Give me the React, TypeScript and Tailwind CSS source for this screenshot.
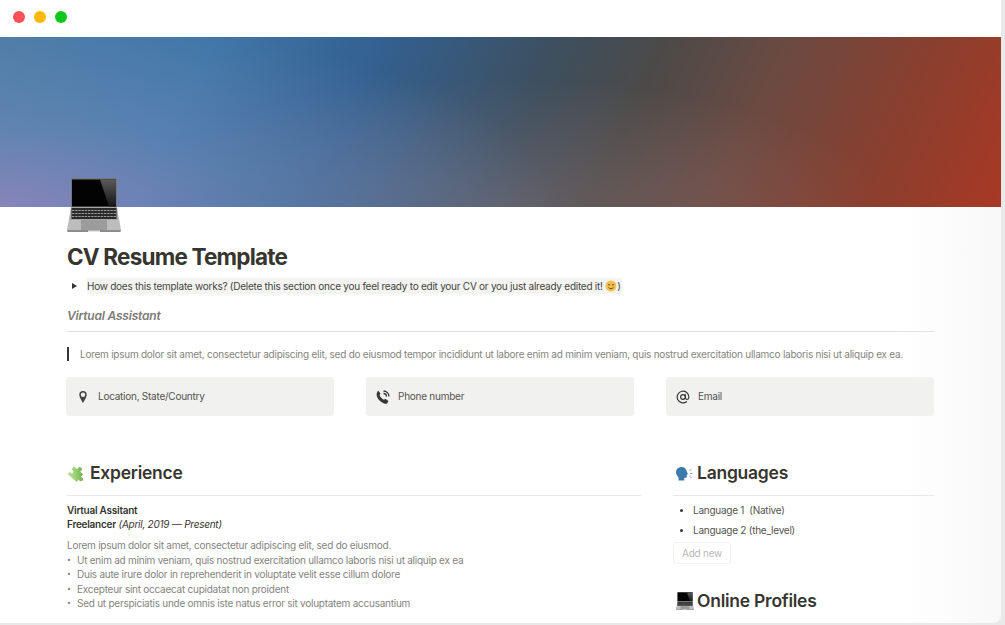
import { AtSign } from "lucide-react";

const sans = { fontFamily: "Inter, 'Liberation Sans', sans-serif" };

const bullets = [
  "Ut enim ad minim veniam, quis nostrud exercitation ullamco laboris nisi ut aliquip ex ea",
  "Duis aute irure dolor in reprehenderit in voluptate velit esse cillum dolore",
  "Excepteur sint occaecat cupidatat non proident",
  "Sed ut perspiciatis unde omnis iste natus error sit voluptatem accusantium",
];

function Laptop({ size }: { size: number }) {
  const gid = `shine${size}`;
  return (
    <svg width={size} height={size} viewBox="0 0 54 54">
      <defs>
        <linearGradient id={gid} x1="0" y1="0" x2="0" y2="1">
          <stop offset="0" stopColor="#5a5a5a" />
          <stop offset="1" stopColor="#161616" />
        </linearGradient>
      </defs>
      <path d="M5 0h44a1 1 0 0 1 1 1v28H4V1a1 1 0 0 1 1-1z" fill="#77777a" />
      <rect x="5" y="1.500" width="44" height="27" fill="#030303" />
      <path d="M33 1.500h16v27h-7z" fill={`url(#${gid})`} />
      <path d="M4 29h46l4 23H0z" fill="#bdbdbd" />
      <path d="M4 29h46l1 13H3z" fill="#a8a8a8" />
      <rect x="4.500" y="30" width="45" height="11" fill="#2a2a2a" />
      <path d="M5 32.500h44M5 35.500h44M5 38.500h44" stroke="#9a9a9a" strokeWidth="1" strokeDasharray="2.400 0.800" />
      <rect x="14" y="42" width="26" height="10" fill="#9c9c9c" />
      <path d="M0 52h54l-.6 2H.6z" fill="#8c8c8c" />
      <rect x="21" y="52.500" width="12" height="1.500" fill="#e4e4e4" />
    </svg>
  );
}

function Puzzle() {
  return (
    <svg width="20" height="20" viewBox="0 0 20 20">
      <defs>
        <linearGradient id="puzzleFill" gradientUnits="userSpaceOnUse" x1="2" y1="18" x2="18" y2="2">
          <stop offset="0" stopColor="#cfe8a8" />
          <stop offset="0.5" stopColor="#92cb6a" />
          <stop offset="1" stopColor="#55934a" />
        </linearGradient>
      </defs>
      <g transform="rotate(40 10 10)">
        <path
          d="M3.500 7h4.200c.4 0-.2-.9-.2-1.700 0-1.300 1-2.100 2.200-2.100s2.200.8 2.200 2.100c0 .8-.6 1.700-.2 1.700h3.800v3.300c0 .4.900-.2 1.700-.2 1.200 0 1.900 1 1.900 2.100s-.7 2.100-1.900 2.100c-.8 0-1.700-.6-1.700-.2V17H3.500v-3.200c0-.4.800.2 1.500.2 1 0 1.700-.8 1.700-1.700s-.7-1.700-1.700-1.700c-.7 0-1.500.6-1.500.2z"
          fill="url(#puzzleFill)"
        />
      </g>
    </svg>
  );
}

function Speaking() {
  return (
    <svg width="19" height="19" viewBox="0 0 19 19">
      <path d="M6.500 3c3 0 5 2 5.200 4.500l1.300 2.700-1.200.5V12.500c0 1-1 1.400-2.500 1.200V16.500H3.500v-3.300C1.800 11.800 1 10 1 8.300 1 5.400 3.300 3 6.500 3z" fill="#3c79ad" />
      <path d="M14.500 6.500l2-1.200M15 9.500h2.500M14.500 12.500l2 1.200" stroke="#8aa6bd" strokeWidth="1" />
    </svg>
  );
}

function Smile() {
  return (
    <svg width="12" height="12" viewBox="0 0 12 12" className="inline-block align-[-2px]">
      <circle cx="6" cy="6" r="5.500" fill="#f0c04f" />
      <path d="M3 4.800h2M7 4.800h2" stroke="#6b4a1a" strokeWidth="1" />
      <path d="M3.500 7.500c1.500 1.500 3.500 1.500 5 0" stroke="#6b4a1a" strokeWidth="1" fill="none" />
    </svg>
  );
}

function PinIcon() {
  return (
    <svg width="16" height="16" viewBox="0 0 16 16" fill="none">
      <path d="M8 2a3.700 3.700 0 0 0-3.700 3.700C4.300 8.300 8 14 8 14s3.700-5.700 3.700-8.300A3.700 3.700 0 0 0 8 2z" fill="#45443f" />
      <circle cx="8" cy="5.700" r="2.200" fill="#f1f1ef" />
    </svg>
  );
}

function PhoneIcon() {
  return (
    <svg width="16" height="16" viewBox="0 0 16 16" fill="none">
      <path d="M3 1.500l2.500 3-1 1.500c.5 2 2.500 4 4.500 4.800l1.500-1 3 2.500-1.500 2.200c-1 .5-2 .3-3.500-.3-3-1.200-5.500-3.700-6.500-6.700-.5-1.500-.5-2.700 0-3.700z" fill="#37352f" />
      <path d="M8.500 2a5.500 5.500 0 0 1 5.500 5.500M8.500 4.500a3 3 0 0 1 3 3" stroke="#37352f" strokeWidth="1.300" />
    </svg>
  );
}

function ContactCard({ icon, label }: { icon: React.ReactNode; label: string }) {
  return (
    <div className="flex h-[39px] flex-1 items-center gap-[7px] rounded-[3px] bg-[#f1f1ef] pl-[9px] text-[10px] tracking-[-0.25px] text-[#55544f]">
      <span className="flex w-4 justify-center">{icon}</span>
      <span>{label}</span>
    </div>
  );
}

function SectionTitle({ icon, title, wide }: { icon: React.ReactNode; title: string; wide?: boolean }) {
  return (
    <div className="flex items-center gap-[3px] text-[17.500px] leading-6 font-semibold tracking-[-0.25px] text-[#37352f]">
      <span className={wide ? "flex w-[21px] justify-end" : "flex w-5"}>{icon}</span>
      <span>{title}</span>
    </div>
  );
}

export default function App() {
  return (
    <div style={sans} className="h-[625px] w-[1005px] overflow-hidden bg-[#e9e9e9]">
      <div className="relative h-[623px] w-[1001px] overflow-hidden rounded-br-lg bg-[linear-gradient(90deg,#ffffff_90%,#f8f8f8_100%)]">
        <div className="flex h-[37px] items-center gap-[9px] bg-white px-[13px] pb-[3px]">
          <span className="h-3 w-3 rounded-full bg-[#ff5257]" />
          <span className="h-3 w-3 rounded-full bg-[#ffb800]" />
          <span className="h-3 w-3 rounded-full bg-[#0fc71e]" />
        </div>

        <div className="h-[170px] bg-[radial-gradient(ellipse_560px_190px_at_0%_100%,rgba(150,135,190,0.8)_0%,rgba(125,145,190,0.4)_45%,rgba(125,145,190,0)_100%),radial-gradient(ellipse_380px_130px_at_50%_100%,rgba(215,170,180,0.2),rgba(215,170,180,0)_100%),linear-gradient(115deg,#4c7ca6_0%,#3f76a8_20%,#33608f_36%,#3d4f5e_52%,#4c4a48_62%,#6a4a42_73%,#8a3f2e_87%,#a83824_100%)]" />

        <div className="px-[67px]">
          <div className="relative -mt-[29px] mb-[11px] h-[53px]">
            <Laptop size={54} />
          </div>
          <h1 className="text-[22.500px] leading-[30px] font-bold tracking-[-0.8px] text-[#37352f]">CV Resume Template</h1>

          <div className="mt-[6px] flex items-center text-[10px] leading-4 tracking-[-0.25px] text-[#45443f]">
            <span className="mr-[10px] ml-[5px] h-0 w-0 border-y-[3px] border-l-[5px] border-y-transparent border-l-[#37352f]" />
            <span className="bg-[#f4f4f2] pr-px">
              How does this template works? (Delete this section once you feel ready to edit your CV or you just already edited it! <Smile />)
            </span>
          </div>

          <div className="mt-[13px] border-b border-[#e3e3e1] pb-[6px] text-[12px] leading-[18px] font-semibold tracking-[-0.2px] text-[#7d7c78] italic">
            Virtual Assistant
          </div>

          <div className="mt-[15px] border-l-2 border-[#37352f] pl-[11px] text-[10px] leading-[14px] tracking-[-0.25px] text-[#858480]">
            Lorem ipsum dolor sit amet, consectetur adipiscing elit, sed do eiusmod tempor incididunt ut labore enim ad minim veniam, quis nostrud exercitation ullamco laboris nisi ut aliquip ex ea.
          </div>

          <div className="mt-[16px] -ml-px flex gap-[32px]">
            <ContactCard icon={<PinIcon />} label="Location, State/Country" />
            <ContactCard icon={<PhoneIcon />} label="Phone number" />
            <ContactCard icon={<AtSign size={14} strokeWidth={2} className="text-[#37352f]" />} label="Email" />
          </div>

          <div className="mt-[45px] flex gap-[32px]">
            <div className="w-[574px]">
              <SectionTitle icon={<Puzzle />} title="Experience" />
              <div className="mt-[10px] border-t border-[#e9e9e7] pt-[7px] text-[10px] tracking-[-0.25px]">
                <div className="leading-[14px] text-[#37352f]">
                  <div className="font-semibold">Virtual Assitant</div>
                  <div>
                    <span className="font-semibold">Freelancer</span> <em>(April, 2019 — Present)</em>
                  </div>
                </div>
                <div className="mt-[7px] leading-[14.500px] text-[#858480]">
                  <div>Lorem ipsum dolor sit amet, consectetur adipiscing elit, sed do eiusmod.</div>
                  {bullets.map((line) => (
                    <div key={line} className="flex">
                      <span className="w-[10px] text-[7px]">•</span>
                      <span>{line}</span>
                    </div>
                  ))}
                </div>
              </div>
            </div>

            <div className="flex-1">
              <SectionTitle wide icon={<Speaking />} title="Languages" />
              <div className="mt-[10px] border-t border-[#e9e9e7] pt-[4px] text-[10px] tracking-[-0.25px] text-[#55544f]">
                <div className="flex h-5 items-center">
                  <span className="mx-[7px] h-[3px] w-[3px] rounded-full bg-[#37352f]" />
                  <span className="ml-[3px]">Language 1&nbsp; (Native)</span>
                </div>
                <div className="flex h-5 items-center">
                  <span className="mx-[7px] h-[3px] w-[3px] rounded-full bg-[#37352f]" />
                  <span className="ml-[3px]">Language 2 (the_level)</span>
                </div>
                <div className="mt-[2px] flex h-[22px] w-[58px] items-center justify-center rounded-[3px] border border-[#f1f1ef] text-[#b9b8b5]">
                  Add new
                </div>
              </div>
              <div className="mt-[25px]">
                <SectionTitle wide icon={<Laptop size={18} />} title="Online Profiles" />
              </div>
            </div>
          </div>
        </div>
      </div>
    </div>
  );
}
